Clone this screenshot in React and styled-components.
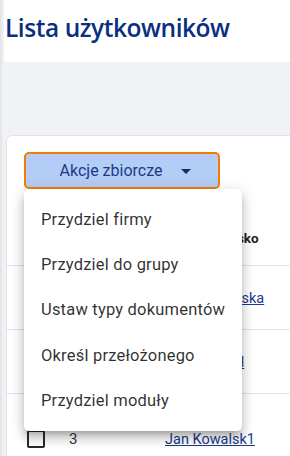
import React from "react";
import styled, { createGlobalStyle } from "styled-components";

const Global = createGlobalStyle`
  html, body { margin: 0; padding: 0; }
  body {
    width: 290px;
    height: 456px;
    overflow: hidden;
    background: #f1f2f6;
    font-family: Roboto, "Liberation Sans", sans-serif;
  }
`;

const Shell = styled.div`
  display: flex;
  min-height: 456px;
`;

const EdgeShade = styled.div`
  width: 4px;
  flex: none;
  background: linear-gradient(to right, #e2e3e6, #eef0f3 70%, #f4f5f7);
`;

const Main = styled.div`
  flex: 1;
  display: flex;
  flex-direction: column;
  min-width: 0;
`;

const PageHeader = styled.header`
  height: 62px;
  background: #ffffff;
  display: flex;
  align-items: flex-start;
  padding: 12px 0 0 1px;
  box-sizing: border-box;
`;

const Title = styled.h1`
  margin: 0;
  font-family: "Open Sans", "Noto Sans", sans-serif;
  font-weight: 600;
  font-size: 24.5px;
  line-height: 32px;
  color: #0b2f7f;
  letter-spacing: -0.45px;
`;

const Content = styled.main`
  flex: 1;
  padding: 73px 0 0 2px;
`;

const Card = styled.section`
  background: #ffffff;
  border: 1px solid #e2e3e6;
  border-radius: 6px 0 0 0;
  margin-right: -20px;
  padding-top: 16px;
  min-height: 400px;
`;

const Toolbar = styled.div`
  position: relative;
  padding-left: 17px;
  margin-bottom: 21px;
`;

const ActionButton = styled.button`
  width: 196px;
  height: 37px;
  box-sizing: border-box;
  display: flex;
  align-items: center;
  justify-content: center;
  gap: 19px;
  padding: 0 0 0 7px;
  background: #b3cdf7;
  border: 2px solid #f57c00;
  border-radius: 5px;
  color: #1b3a86;
  font-family: Roboto, sans-serif;
  font-size: 16px;
  cursor: pointer;
`;

const Caret = styled.span`
  width: 0;
  height: 0;
  border-left: 5px solid transparent;
  border-right: 5px solid transparent;
  border-top: 5px solid #0f2d6e;
  margin-top: 1px;
`;

const Menu = styled.ul`
  position: absolute;
  top: 37px;
  left: 17px;
  width: 218px;
  margin: 0;
  padding: 8px 0;
  list-style: none;
  background: #ffffff;
  border-radius: 5px;
  box-shadow: 0px 5px 5px -3px rgba(0, 0, 0, 0.2),
    0px 8px 10px 1px rgba(0, 0, 0, 0.14), 0px 3px 14px 2px rgba(0, 0, 0, 0.12);
  z-index: 10;
`;

const MenuItem = styled.li`
  height: 45.2px;
  display: flex;
  align-items: center;
  padding: 0 17px;
  font-size: 16.5px;
  color: rgba(0, 0, 0, 0.82);
  letter-spacing: 0.2px;
  white-space: nowrap;
`;

const Table = styled.div`
  display: flex;
  flex-direction: column;
`;

const Row = styled.div`
  display: grid;
  grid-template-columns: 42px 96px 1fr;
  align-items: center;
  padding-left: 20px;
  height: ${(p) => p.$h}px;
  border-bottom: 1px solid #e2e3e6;
  box-sizing: border-box;
`;

const HeadCell = styled.div`
  font-weight: 700;
  font-size: 13.5px;
  color: #222;
  white-space: nowrap;
`;

const Checkbox = styled.span`
  display: block;
  width: 18px;
  height: 18px;
  box-sizing: border-box;
  border: 2px solid #2a2a2a;
  border-radius: 2px;
`;

const IdCell = styled.div`
  font-size: 15px;
  color: #333;
`;

const NameLink = styled.a`
  font-size: 14.5px;
  color: #1a3b8c;
  text-decoration: underline;
  white-space: nowrap;
`;

const actions = [
  "Przydziel firmy",
  "Przydziel do grupy",
  "Ustaw typy dokumentów",
  "Określ przełożonego",
  "Przydziel moduły",
];

const users = [
  { id: 1, name: "Anna Kowalska", h: 64 },
  { id: 2, name: "Piotr Wróbel", h: 64 },
  { id: 3, name: "Jan Kowalsk1", h: 90 },
];

export default function App() {
  return (
    <>
      <Global />
      <Shell>
        <EdgeShade />
        <Main>
          <PageHeader>
            <Title>Lista użytkowników</Title>
          </PageHeader>
          <Content>
            <Card>
              <Toolbar>
                <ActionButton type="button">
                  <span>Akcje zbiorcze</span>
                  <Caret />
                </ActionButton>
                <Menu>
                  {actions.map((a) => (
                    <MenuItem key={a}>{a}</MenuItem>
                  ))}
                </Menu>
              </Toolbar>
              <Table>
                <Row $h={56}>
                  <Checkbox />
                  <HeadCell>ID</HeadCell>
                  <HeadCell>Imię i nazwisko</HeadCell>
                </Row>
                {users.map((u) => (
                  <Row key={u.id} $h={u.h}>
                    <Checkbox />
                    <IdCell>{u.id}</IdCell>
                    <div>
                      <NameLink href="#">{u.name}</NameLink>
                    </div>
                  </Row>
                ))}
              </Table>
            </Card>
          </Content>
        </Main>
      </Shell>
    </>
  );
}
